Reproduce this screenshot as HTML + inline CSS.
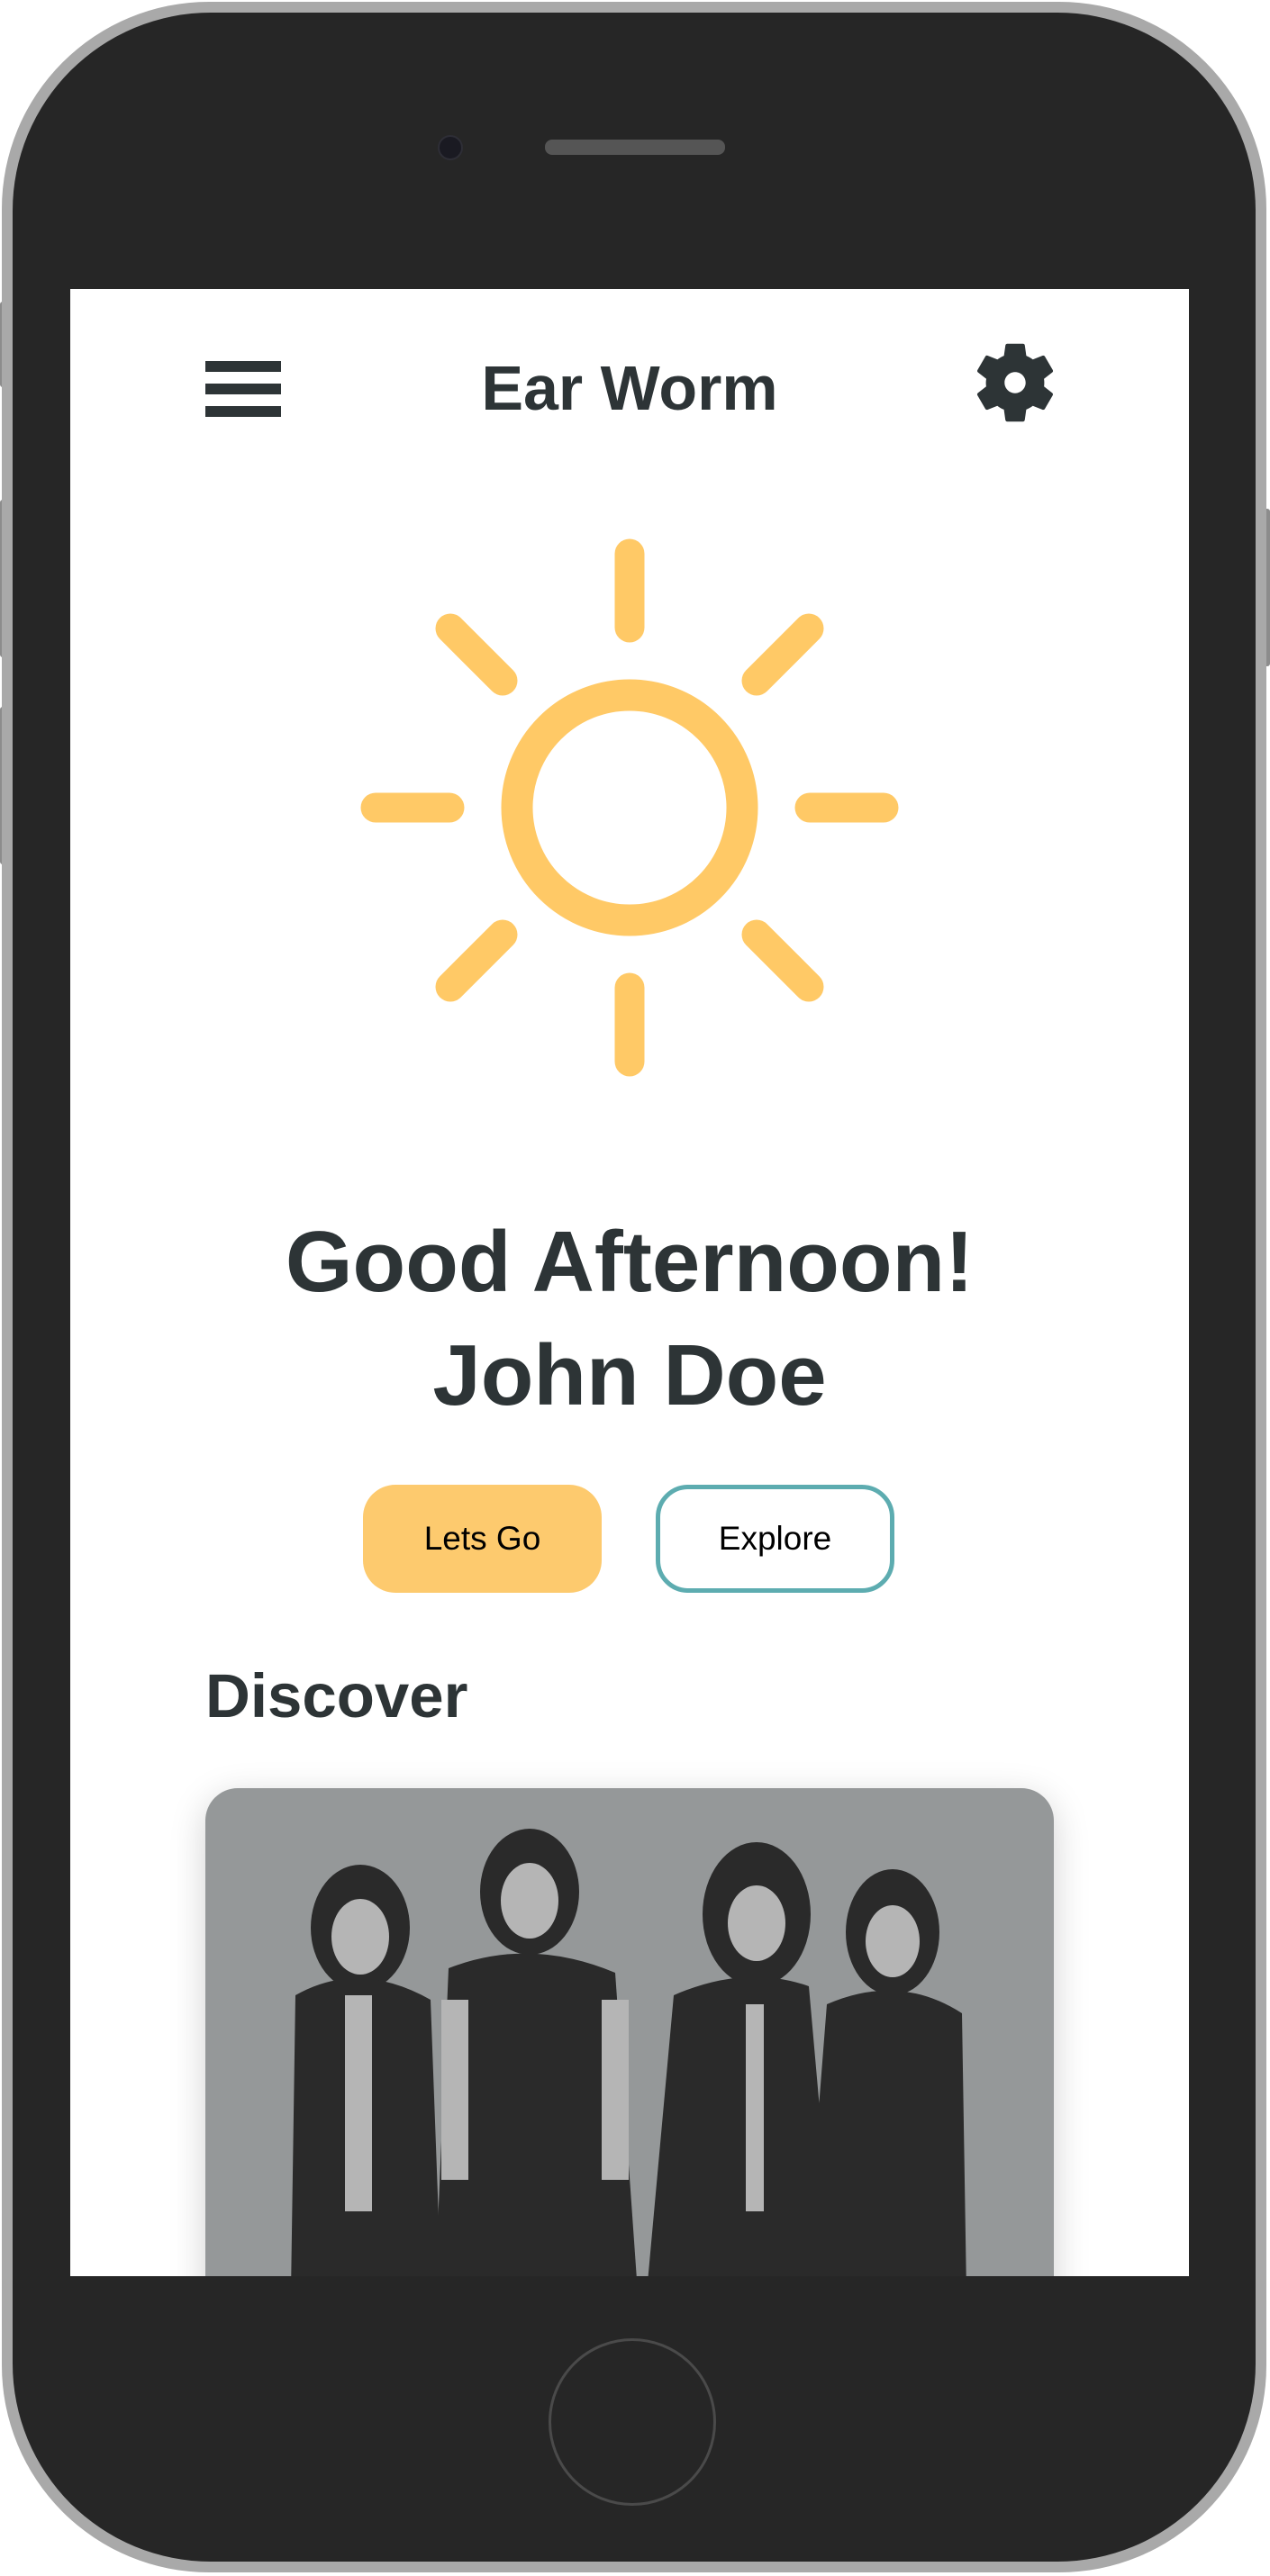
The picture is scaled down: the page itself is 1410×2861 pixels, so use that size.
<!DOCTYPE html>
<html><head><meta charset="utf-8"><style>
html,body{margin:0;padding:0;background:#fff;}
body{width:1410px;height:2861px;position:relative;overflow:hidden;font-family:"Liberation Sans",sans-serif;}
.abs{position:absolute;}
.outer{left:2px;top:2px;width:1404px;height:2855px;border-radius:230px;background:#a9a9a9;}
.inner{left:14px;top:14px;width:1380px;height:2831px;border-radius:220px;background:#262626;}
.screen{left:78px;top:321px;width:1242px;height:2207px;background:#fff;overflow:hidden;}
.btnside{background:#8c8c8c;border-radius:3px;width:8px;}
.h{color:#2d3436;font-weight:bold;text-align:center;}
</style></head><body>
<div class="abs btnside" style="left:0;top:335px;height:95px"></div>
<div class="abs btnside" style="left:0;top:555px;height:175px"></div>
<div class="abs btnside" style="left:0;top:785px;height:175px"></div>
<div class="abs btnside" style="left:1402px;top:565px;height:175px"></div>
<div class="abs outer"></div>
<div class="abs inner"></div>
<div class="abs" style="left:486px;top:150px;width:24px;height:24px;border-radius:50%;background:#1a1a22;border:2px solid #2e2e36"></div>
<div class="abs" style="left:605px;top:155px;width:200px;height:17px;border-radius:8px;background:#555;"></div>
<div class="abs" style="left:609px;top:2597px;width:186px;height:186px;border-radius:50%;border:3px solid #4a4a4a;box-sizing:border-box;"></div>
<div class="abs screen">
  <div class="abs" style="left:150px;top:80px;width:84px;height:12px;background:#2d3436"></div>
  <div class="abs" style="left:150px;top:105px;width:84px;height:12px;background:#2d3436"></div>
  <div class="abs" style="left:150px;top:130px;width:84px;height:12px;background:#2d3436"></div>
  <div class="abs h" style="left:0;width:1242px;top:70px;font-size:70px;line-height:80px;">Ear Worm</div>
  <svg class="abs" style="left:995px;top:50px" width="108" height="108" viewBox="0 0 24 24"><path fill="#2d3436" d="M19.14 12.94c.04-.3.06-.61.06-.94 0-.32-.02-.64-.07-.94l2.03-1.58a.49.49 0 0 0 .12-.61l-1.920-3.32a.49.49 0 0 0-.59-.22l-2.39.96c-.5-.38-1.03-.7-1.62-.94l-.36-2.54a.48.48 0 0 0-.48-.41h-3.84c-.24 0-.43.17-.47.41l-.36 2.54c-.59.24-1.13.57-1.62.94l-2.39-.96a.48.48 0 0 0-.59.22L2.74 8.87c-.12.21-.08.47.12.61l2.03 1.58c-.05.3-.09.63-.09.94s.02.64.07.94l-2.03 1.58a.49.49 0 0 0-.12.61l1.92 3.32c.12.22.37.29.59.22l2.39-.96c.5.38 1.03.7 1.62.94l.36 2.54c.05.24.24.41.48.41h3.840c.24 0 .44-.17.47-.41l.36-2.54c.59-.24 1.130-.56 1.62-.94l2.39.96c.22.08.47 0 .59-.22l1.92-3.32c.12-.22.07-.47-.12-.61l-2.01-1.58zM12 14.6c-1.43 0-2.6-1.17-2.6-2.6s1.17-2.6 2.6-2.6 2.6 1.17 2.6 2.6-1.17 2.6-2.6 2.6z"/></svg>
  <svg class="abs" style="left:321px;top:276px" width="600" height="600" viewBox="-300 -300 600 600">
    <g stroke="#FFC966" stroke-linecap="round" fill="none">
      <circle r="125" stroke-width="35"/>
      <g stroke-width="33">
        <line x1="0" y1="-200" x2="0" y2="-282"/>
        <line x1="0" y1="200" x2="0" y2="282"/>
        <line x1="-200" y1="0" x2="-282" y2="0"/>
        <line x1="200" y1="0" x2="282" y2="0"/>
        <line x1="141" y1="-141" x2="199" y2="-199"/>
        <line x1="-141" y1="-141" x2="-199" y2="-199"/>
        <line x1="141" y1="141" x2="199" y2="199"/>
        <line x1="-141" y1="141" x2="-199" y2="199"/>
      </g>
    </g>
  </svg>
  <div class="abs h" style="left:0;width:1242px;top:1018px;font-size:96px;line-height:126px;">Good Afternoon!<br>John Doe</div>
  <div class="abs" style="left:325px;top:1328px;width:265px;height:120px;border-radius:36px;background:#FDCA6E;text-align:center;line-height:120px;font-size:37px;color:#000">Lets Go</div>
  <div class="abs" style="left:650px;top:1328px;width:265px;height:120px;border-radius:36px;border:5px solid #5DACB0;box-sizing:border-box;text-align:center;line-height:110px;font-size:37px;color:#000">Explore</div>
  <div class="abs" style="left:150px;top:1523px;font-size:69px;font-weight:bold;color:#2d3436;">Discover</div>
  <div class="abs" style="left:150px;top:1665px;width:942px;height:700px;border-radius:36px;background:#959899;box-shadow:0 10px 40px rgba(0,0,0,0.18);overflow:hidden">
    <svg width="942" height="700" viewBox="0 0 942 700">
      <g fill="#2a2a2a">
        <ellipse cx="172" cy="155" rx="55" ry="70"/>
        <path d="M100 230 Q170 190 250 235 L262 560 L95 560 Z"/>
        <ellipse cx="360" cy="115" rx="55" ry="70"/>
        <path d="M270 200 Q360 165 455 205 L480 560 L255 560 Z"/>
        <ellipse cx="612" cy="140" rx="60" ry="80"/>
        <path d="M520 230 Q600 195 670 220 L700 560 L490 560 Z"/>
        <ellipse cx="763" cy="160" rx="52" ry="70"/>
        <path d="M690 240 Q770 205 840 250 L845 560 L665 560 Z"/>
      </g>
      <g fill="#b5b5b5">
        <ellipse cx="172" cy="165" rx="32" ry="42"/>
        <ellipse cx="360" cy="125" rx="32" ry="42"/>
        <ellipse cx="612" cy="150" rx="32" ry="42"/>
        <ellipse cx="763" cy="170" rx="30" ry="40"/>
        <rect x="155" y="230" width="30" height="240"/>
        <rect x="262" y="235" width="30" height="200"/>
        <rect x="440" y="235" width="30" height="200"/>
        <rect x="600" y="240" width="20" height="230"/>
      </g>
    </svg>
  </div>
</div>
</body></html>
